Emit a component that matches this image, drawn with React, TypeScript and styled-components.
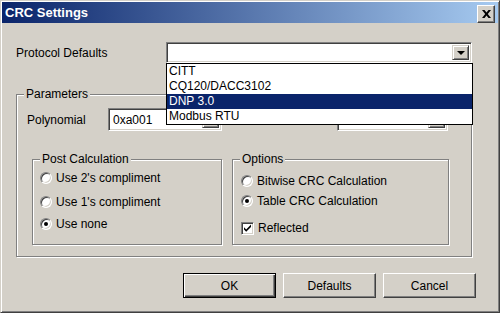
import styled, { createGlobalStyle } from 'styled-components';

const GlobalStyle = createGlobalStyle`
  html, body {
    margin: 0;
    padding: 0;
    background: #d4d0c8;
  }
  body {
    font-family: "Liberation Sans", Arial, sans-serif;
    font-size: 12px;
    color: #000;
  }
`;

const Window = styled.div`
  box-sizing: border-box;
  width: 500px;
  height: 313px;
  display: flex;
  flex-direction: column;
  padding: 1px;
  background: #d4d0c8;
  border: 1px solid;
  border-color: #d4d0c8 #404040 #404040 #d4d0c8;
  box-shadow: inset 1px 1px #fff, inset -1px -1px #808080;
`;

const TitleBar = styled.div`
  height: 21px;
  display: flex;
  align-items: center;
  justify-content: space-between;
  padding: 0 3px 0 3px;
  background: linear-gradient(to right, #0a246a, #a6caf0);
  color: #fff;
  font-weight: bold;
  font-size: 13px;
`;

const CloseButton = styled.div`
  box-sizing: border-box;
  width: 18px;
  height: 18px;
  margin-top: 2px;
  display: flex;
  align-items: center;
  justify-content: center;
  background: #d4d0c8;
  border: 1px solid;
  border-color: #fff #404040 #404040 #fff;
  box-shadow: inset -1px -1px #808080;
`;

const Body = styled.div`
  flex: 1;
  display: flex;
  flex-direction: column;
  padding: 19px 0 0 14px;
`;

const FieldRow = styled.div`
  display: flex;
  align-items: center;
  height: 21px;
  margin-right: 26px;
`;

const Label = styled.div<{ $width: number }>`
  width: ${p => p.$width}px;
  flex-shrink: 0;
`;

const ComboWrap = styled.div<{ $width?: number }>`
  position: relative;
  box-sizing: border-box;
  ${p => (p.$width ? `width: ${p.$width}px;` : 'flex: 1;')}
  height: ${p => (p.$width ? 23 : 21)}px;
  display: flex;
  align-items: center;
  justify-content: space-between;
  padding: 2px;
  background: #fff;
  border: 1px solid;
  border-color: #808080 #fff #fff #808080;
  box-shadow: inset 1px 1px #404040, inset -1px -1px #d4d0c8;
`;

const ComboText = styled.span`
  padding-left: 2px;
`;

const ComboButton = styled.div`
  box-sizing: border-box;
  width: 17px;
  align-self: stretch;
  display: flex;
  align-items: center;
  justify-content: center;
  background: #d4d0c8;
  border: 1px solid;
  border-color: #d4d0c8 #404040 #404040 #d4d0c8;
  box-shadow: inset 1px 1px #fff, inset -1px -1px #808080;
`;

const Arrow = styled.span`
  width: 0;
  height: 0;
  border-left: 4px solid transparent;
  border-right: 4px solid transparent;
  border-top: 4px solid #000;
`;

const DropList = styled.ul`
  position: absolute;
  top: 100%;
  left: -1px;
  right: -2px;
  z-index: 10;
  margin: 1px 0 0;
  padding: 0;
  list-style: none;
  background: #fff;
  border: 1px solid #000;
`;

const DropItem = styled.li<{ $selected?: boolean }>`
  height: 15px;
  line-height: 15px;
  padding-left: 2px;
  background: ${p => (p.$selected ? '#0a246a' : '#fff')};
  color: ${p => (p.$selected ? '#fff' : '#000')};
`;

const Group = styled.fieldset`
  box-sizing: border-box;
  margin: 0;
  padding: 0;
  min-width: 0;
  border: 1px solid #808080;
  box-shadow: inset 1px 1px #fff, 1px 1px #fff;
`;

const Legend = styled.legend`
  margin-left: 7px;
  padding: 0 2px;
  line-height: 14px;
  background: #d4d0c8;
`;

const ParamsGroup = styled(Group)`
  margin: 24px 26px 0 0;
  padding-bottom: 11px;
`;

const PolyRow = styled.div`
  display: flex;
  align-items: center;
  justify-content: space-between;
  padding: 7px 23px 0 10px;
`;

const PolyField = styled.div`
  display: flex;
  align-items: center;
`;

const InnerRow = styled.div`
  display: flex;
  gap: 10px;
  margin-top: 21px;
  padding: 0 22px 0 15px;
`;

const SubGroup = styled(Group)<{ $width: number }>`
  width: ${p => p.$width}px;
  height: 93px;
`;

const OptionList = styled.div<{ $indent: number }>`
  display: flex;
  flex-direction: column;
  padding: 1px 0 0 ${p => p.$indent}px;
`;

const OptionRow = styled.label<{ $space?: number }>`
  display: flex;
  align-items: center;
  gap: 4px;
  height: 22px;
  margin-top: ${p => p.$space ?? 0}px;
`;

const RadioDot = styled.span<{ $checked?: boolean }>`
  box-sizing: border-box;
  width: 12px;
  height: 12px;
  border-radius: 50%;
  display: flex;
  align-items: center;
  justify-content: center;
  background: #fff;
  border: 1px solid;
  border-color: #808080 #fff #fff #808080;
  box-shadow: inset 1px 1px #404040, inset -1px -1px #d4d0c8;
  &::after {
    content: '';
    width: 4px;
    height: 4px;
    border-radius: 50%;
    background: ${p => (p.$checked ? '#000' : 'transparent')};
  }
`;

const CheckBox = styled.span`
  box-sizing: border-box;
  width: 13px;
  height: 13px;
  display: flex;
  align-items: center;
  justify-content: center;
  background: #fff;
  border: 1px solid;
  border-color: #808080 #fff #fff #808080;
  box-shadow: inset 1px 1px #404040, inset -1px -1px #d4d0c8;
`;

const Footer = styled.div`
  display: flex;
  justify-content: flex-end;
  gap: 7px;
  padding: 16px 22px 0 0;
`;

const Button = styled.button<{ $default?: boolean }>`
  box-sizing: border-box;
  width: 93px;
  height: 25px;
  padding: 0;
  font: inherit;
  color: #000;
  background: #d4d0c8;
  border: 1px solid;
  border-color: ${p => (p.$default ? '#000' : '#fff #404040 #404040 #fff')};
  box-shadow: ${p =>
    p.$default
      ? 'inset 1px 1px #fff, inset -1px -1px #404040, inset -2px -2px #808080'
      : 'inset -1px -1px #808080'};
`;

function Radio({ checked, label }: { checked?: boolean; label: string }) {
  return (
    <>
      <RadioDot $checked={checked} />
      <span>{label}</span>
    </>
  );
}

export default function App() {
  return (
    <>
      <GlobalStyle />
      <Window>
        <TitleBar>
          <span>CRC Settings</span>
          <CloseButton>
            <svg width="9" height="8" viewBox="0 0 9 8">
              <path d="M0 0h2.5l2 2.6L6.5 0H9L5.8 4 9 8H6.5l-2-2.6-2 2.6H0l3.2-4z" fill="#000" />
            </svg>
          </CloseButton>
        </TitleBar>

        <Body>
          <FieldRow>
            <Label $width={150}>Protocol Defaults</Label>
            <ComboWrap>
              <ComboText />
              <ComboButton>
                <Arrow />
              </ComboButton>
              <DropList>
                <DropItem>CITT</DropItem>
                <DropItem>CQ120/DACC3102</DropItem>
                <DropItem $selected>DNP 3.0</DropItem>
                <DropItem>Modbus RTU</DropItem>
              </DropList>
            </ComboWrap>
          </FieldRow>

          <ParamsGroup>
            <Legend>Parameters</Legend>
            <PolyRow>
              <PolyField>
                <Label $width={81}>Polynomial</Label>
                <ComboWrap $width={114}>
                  <ComboText>0xa001</ComboText>
                  <ComboButton>
                    <Arrow />
                  </ComboButton>
                </ComboWrap>
              </PolyField>
              <ComboWrap $width={111}>
                <ComboText />
                <ComboButton>
                  <Arrow />
                </ComboButton>
              </ComboWrap>
            </PolyRow>

            <InnerRow>
              <SubGroup $width={190}>
                <Legend>Post Calculation</Legend>
                <OptionList $indent={7}>
                  <OptionRow>
                    <Radio label="Use 2's compliment" />
                  </OptionRow>
                  <OptionRow $space={2}>
                    <Radio label="Use 1's compliment" />
                  </OptionRow>
                  <OptionRow>
                    <Radio checked label="Use none" />
                  </OptionRow>
                </OptionList>
              </SubGroup>

              <SubGroup $width={217}>
                <Legend>Options</Legend>
                <OptionList $indent={8}>
                  <OptionRow $space={3}>
                    <Radio label="Bitwise CRC Calculation" />
                  </OptionRow>
                  <OptionRow $space={-2}>
                    <Radio checked label="Table CRC Calculation" />
                  </OptionRow>
                  <OptionRow $space={5}>
                    <CheckBox>
                      <svg width="9" height="9" viewBox="0 0 9 9">
                        <path d="M1 3.2l2.2 2.2L8 .6v2.4L3.2 7.8 1 5.6z" fill="#000" />
                      </svg>
                    </CheckBox>
                    <span>Reflected</span>
                  </OptionRow>
                </OptionList>
              </SubGroup>
            </InnerRow>
          </ParamsGroup>

          <Footer>
            <Button $default>OK</Button>
            <Button>Defaults</Button>
            <Button>Cancel</Button>
          </Footer>
        </Body>
      </Window>
    </>
  );
}
